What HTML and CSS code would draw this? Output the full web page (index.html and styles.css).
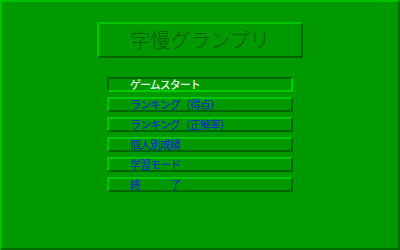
FILE: index.html
```html
<!DOCTYPE html>
<html lang="ja">
<head>
<meta charset="utf-8">
<link rel="stylesheet" href="styles.css">
</head>
<body>
<div class="screen">
  <div class="title">字慢グランプリ</div>
  <ul class="menu">
    <li class="item selected">ゲームスタート</li>
    <li class="item">ランキング（得点）</li>
    <li class="item">ランキング（正解率）</li>
    <li class="item">個人別成績</li>
    <li class="item">学習モード</li>
    <li class="item">終　　　了</li>
  </ul>
</div>
</body>
</html>
```
FILE: styles.css
```css
html, body {
  margin: 0;
  padding: 0;
  background: #009900;
}
.screen {
  box-sizing: border-box;
  width: 400px;
  height: 250px;
  background: #009900;
  border: 2px solid;
  border-color: #00c000 #006c00 #006c00 #00c000;
  display: flex;
  flex-direction: column;
  align-items: center;
  font-family: "Noto Sans CJK JP", sans-serif;
}
.title {
  box-sizing: border-box;
  margin-top: 20px;
  width: 206px;
  height: 36px;
  border: 2px solid;
  border-color: #00c800 #006400 #006400 #00c800;
  color: #005c00;
  font-size: 20px;
  font-weight: 300;
  line-height: 32px;
  text-align: center;
}
.menu {
  list-style: none;
  margin: 19px 0 0 0;
  padding: 0;
  display: flex;
  flex-direction: column;
  gap: 5px;
}
.item {
  box-sizing: border-box;
  width: 186px;
  height: 15px;
  border: 2px solid;
  border-color: #00c800 #006400 #006400 #00c800;
  padding-left: 21px;
  color: #1034b8;
  font-size: 11px;
  letter-spacing: -1px;
  font-weight: 500;
  line-height: 11px;
  white-space: pre;
  text-spacing-trim: space-all;
}
.item.selected {
  border-color: #006400 #00cc00 #00cc00 #006400;
  color: #e4f4e4;
}
```
